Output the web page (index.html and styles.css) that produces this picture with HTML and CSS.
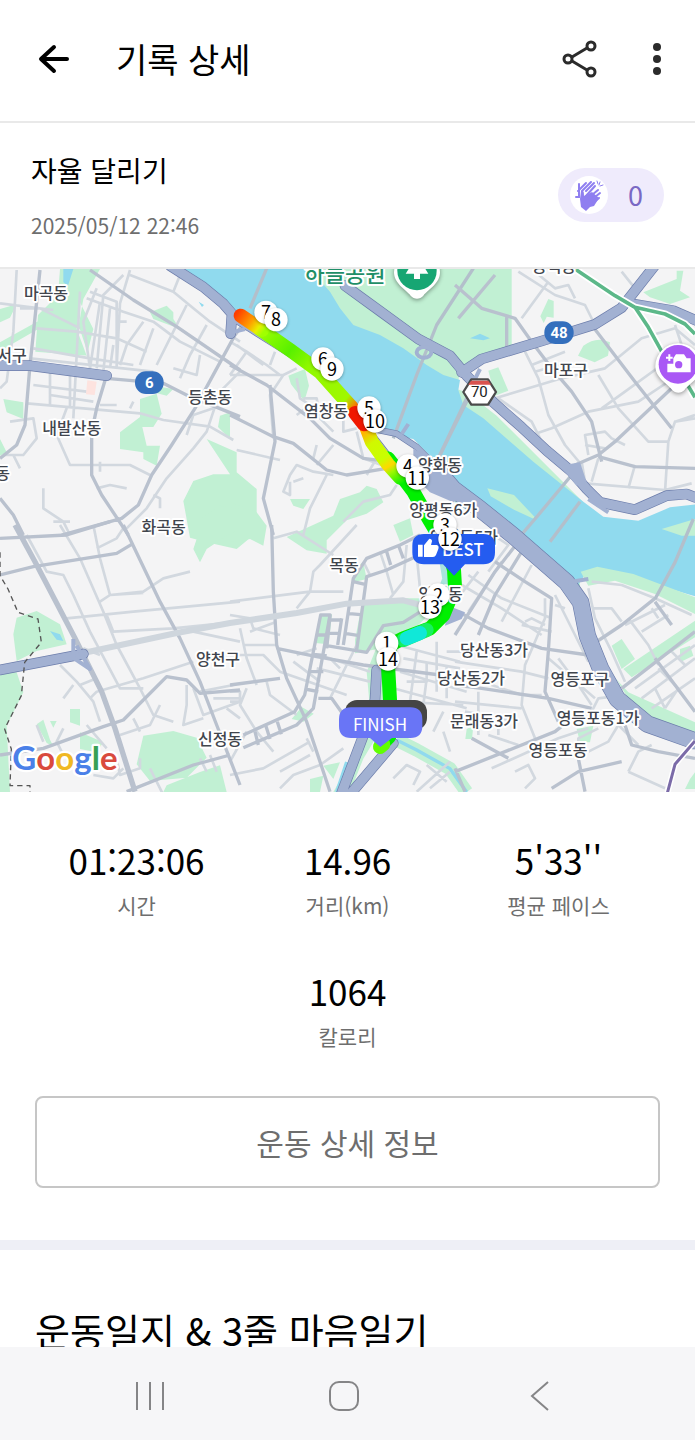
FILE: index.html
```html
<!DOCTYPE html>
<html lang="ko">
<head>
<meta charset="utf-8">
<meta name="viewport" content="width=device-width, initial-scale=1">
<title>기록 상세</title>
<link rel="stylesheet" href="styles.css">
</head>
<body>
<div class="app">
  <header class="topbar">
    <button class="icon-button" type="button" aria-label="뒤로">
      <svg width="36" height="36" viewBox="0 0 36 36" fill="none" stroke="#000" stroke-width="4" stroke-linecap="round" stroke-linejoin="round"><path d="M18 6 5 18l13 12M6 18h25"/></svg>
    </button>
    <h1 class="topbar-title">기록 상세</h1>
    <button class="icon-button" type="button" aria-label="공유">
      <svg width="38" height="38" viewBox="0 0 38 38" fill="none" stroke="#2b2b2b" stroke-width="3"><path d="M11 17 26 8M11 21l15 9"/><circle cx="7" cy="19" r="4"/><circle cx="30" cy="6" r="4"/><circle cx="30" cy="32" r="4"/></svg>
    </button>
    <button class="icon-button more" type="button" aria-label="더보기">
      <svg width="12" height="36" viewBox="0 0 12 36" fill="#2b2b2b"><circle cx="6" cy="6" r="4"/><circle cx="6" cy="18" r="4"/><circle cx="6" cy="30" r="4"/></svg>
    </button>
  </header>

  <main class="content">
    <section class="summary">
      <div>
        <h2 class="summary-title">자율 달리기</h2>
        <time class="summary-date" datetime="2025-05-12T22:46">2025/05/12 22:46</time>
      </div>
      <button class="cheer" type="button" aria-label="응원 0">
        <span class="cheer-icon">
          <svg width="38" height="38" viewBox="0 0 38 38" fill="none" stroke="#8f7ff0" stroke-width="3" stroke-linecap="round">
            <path stroke-width="2" d="M9 8v13l-3 0M8 15l8-8M12 15l9-9M16 15l8-8"/>
            <path fill="#8f7ff0" stroke="none" d="M11 15c3-1 3 2 3 5l8-4 7 6-5 8-4 1-4 4-5-4-1-8z"/>
            <path stroke-width="2" d="m15 21 10-11M17 23l11-9M20 25l10-8M22 28l7-6"/>
            <path stroke-width="1" d="m27 5 1 3M30 6l-1 3M33 9l-3 1"/>
          </svg>
        </span>
        <span class="cheer-count">0</span>
      </button>
    </section>

    <svg class="map" viewBox="0 0 2085 1569" preserveAspectRatio="xMidYMid slice" role="img" aria-label="달리기 경로 지도">
      <defs>
        <linearGradient id="g-start" gradientUnits="userSpaceOnUse" x1="710" y1="130" x2="790" y2="190"><stop offset="0" stop-color="#ff3c00"/><stop offset=".5" stop-color="#ff9a00"/><stop offset=".8" stop-color="#e8f000"/><stop offset="1" stop-color="#a0ff00"/></linearGradient>
        <linearGradient id="g-mid" gradientUnits="userSpaceOnUse" x1="1110" y1="480" x2="1215" y2="640"><stop offset="0" stop-color="#ffb400"/><stop offset=".2" stop-color="#d0f800"/><stop offset=".5" stop-color="#c8ff00"/><stop offset=".65" stop-color="#ffd800"/><stop offset=".75" stop-color="#a0f800"/><stop offset="1" stop-color="#00f000"/></linearGradient>
        <linearGradient id="g-long" gradientUnits="userSpaceOnUse" x1="780" y1="180" x2="1060" y2="420"><stop offset="0" stop-color="#a0ff00"/><stop offset=".3" stop-color="#58f000"/><stop offset=".5" stop-color="#90f800"/><stop offset=".9" stop-color="#a0f800"/><stop offset="1" stop-color="#ff7000"/></linearGradient>
      </defs>

      <rect class="land" width="2085" height="1569"/>

      <!-- parks -->
      <g class="park">
        <path d="M180 0h120l-50 90-14 80 30 90-160-12 8-110 60-60zM240 100l-10 80 30 80 20-80zM0 120l50-14-20 40-30 14zM0 220l180-100-30 40-150 86zM450 130l50-20 20 20 0 20 20 30-80-30zM460 350l60 10-20 20-40-10zM420 390l50-16 15 60-25 40-40 0zM360 490l60-46 20 86 40 0-10 60-40-20 0-20-70-10zM660 440l30-10v80l-36-36zM620 510l90 40 0 60 60 50v130l-60 50-90-20-50-14-20-110 30-60 60-20 50 0z"/>
        <path d="M0 510l20 40-20 10zM10 390l60 10v50l-50-20z"/>
        <path d="M930 0h605v238l-155 60-10 80-180-30-260-200z"/>
        <path d="M1465 305l30-10 30 70-40 15z"/>
        <path d="M1645 90l16 6v50l-30-4 30-40-30 60-10-20zM1750 230q40-30 80-10l-6 40-40 20-50-20zM1930 70l100-40 0-25 20 0-10 60 30 20-60 20-60-20z"/>
        <path d="M865 320l50-20 12 50-14 46-40-50zM870 690l60 0-20 30-30-10zM1000 740l20-50 60-20 20-20 30 10 20 40-50 34-60 20-60 60 0 40-60-10-60-40z"/>
        <path d="M690 700l80 30 30 40-10 60-40-20-60 10z"/>
        <path d="M600 780l-20 60 20 40 20-40 60-40 40-20v-60l-60-10-60 40zM50 1046l60-20 70 40 20 60-90 20-60 30-10-80zM0 1210h50l20 60-50 100 10 199H0zM110 1366l20-14 20 60 10 20-20-10zM210 1320l30 0 0 50-30-10zM150 1356l20 0-10 20zM240 1390l70 30-20 30-50-10zM430 1400l90-14 70 20 30 60-60 60-110 10-40-50zM500 1549l100-40 60-20 20 80H490z"/>
        <path d="M1085 1008l110-20 80 0 20 40-50 50-100 60-80 15 0-40zM960 1036h36l-10 90-40-4zM875 1350l30-36 36 20-30 24zM970 1490l50-10-20 50zM930 1530l40-10-10 49h-30zM1180 768l50-20 10 50-40 20zM1060 900l30-20 10 50-40 10z"/>
        <path d="M1000 1569l90-160 20-90-10-110 40-100 40 20-30 130 0 110-60 100-40 100z"/>
        <path d="M1745 1010l20 110 90 120 60 100 170 60v-40l-200-90-110-120-40-120zM1835 1130l30-20 40 60-40 30zM1870 1200l215-145v50l-190 120zM2040 1140l30-10 10 30-40 20zM1730 1380l50-10-10 50-30 0zM1400 1380l20-10-4 40-20 0zM2070 1530l15-20v50h-30z"/>
      </g>

      <!-- Han river -->
      <path class="park" d="M1350 610l350 260 40 50v50l-60-20-60-60-80-70-100-70-90-60zM1370 360l30 10 90 70 110 110 90 90 60 60-40 0-280-230-80-60z"/>
      <path class="water" d="M540 0h390l60 68 30 50 40 50 80 30 70 40 70 50 50 30 50 15-5 30 15 45 60 40 150 130 150 120 60 45 105 12 95-40 85-10v280l-185-55-110-25-40 5-28 40-42-40-60-60-80-70-100-80-90-65-50-55-70-70-70-12-100-55-90-100-130-100-110-70-60-60z"/>
      <path class="park" d="M1742 908l50-15 108 22 185 70v50l-120-60-120-40-80 15zM1985 780l100-30v50l-40 0z"/>
      <path class="water" d="M190 0h30l-16 50-14-10zM150 1086l30 10 10 20-20-4zM1410 208l30-14 30 14-20 6zM596 98l16 10-6 6z"/>
      <path class="park" d="M1462 658l80 20 60 64 0 8-60-28-70-40z"/>
      <path class="bank" d="M1190 1413l60 30 100 56 50 70"/>
      <path class="stream" d="M1010 1569l30-90M1190 1413l60 30 100 56 50 70"/>
      <path class="shore" d="M1330 770v100l10 60-20 50"/>

      <!-- local streets -->
      <g class="minor" transform="translate(0 -12)">
        <path d="M50 15 40 200 20 350 0 370M0 115l160 20M60 130l60 0 120 60M110 190l120 10 120 20 90 40M100 250l170 30 130 20M240 80l-20 380M390 15l-30 100-10 190M270 80l80 30 0 200M290 70l-40 100 20 140M370 30l-60 60-20 220M390 30l130 50 60 50 50 40 90 60M520 80l20-50M260 100l110 40 90 30 80 60 120 60M430 170l-50 70-20 60M460 190l-40 110M560 120l-40 80-50 100M620 180l-50 90-30 70M600 270l-10 60-70-20M90 280l370 40M150 300v120M210 320v110M100 360l160 20M150 390l130 20M80 415l340 30 70 20 140 20 70 40M200 430l-30 80 40 90 180 0 60 30M300 590v30M130 670l0 60 60 40 20 40M290 670l40-10 50 10M30 470l70-10 10 60-40 50-60 0M40 570l20 40M300 420l50 0M400 410l-10 20M720 320l-60 60-40 120-40 50-80 90-60 90-60 60M560 510l20-60 60-20M160 770h50M460 690l20 10 0 30M300 110l-30 200M330 130l-20 190M350 170l30 0M340 240l-10 70"/>
      </g>
      <g class="minor" transform="translate(690 -12)">
        <path d="M0 230l50 30 60 40 40 30M50 260l-50 70M0 330l160 0M100 300l-80-60M120 300l15-40M160 330l-40 60 10 130M160 330l40-20M200 340l10 60 30 20-40 30M220 400l40 0 10 60 40 40M20 555l130 30M310 630l-60-10-50-20-20 30-20 50 20 10 0-40M250 580l10-40M260 600l50-60M290 630l-50 100-20 80M190 650l30-10M340 460v40l40-10M380 500l20 80 80 30M440 580l-30 50M340 770l60-60 80-20 20-30"/>
      </g>
      <g class="minor" transform="translate(1365 -12)">
        <path d="M190 20l110 70 90 30 30 60M240 20l60 50 40-10 20 40M200 160l80-110M120 400l200-60 130-30 110-90 100-30 60 50M230 300l100-40M240 320l70-20M210 260l40 80 30 110 50 90 50 60M130 400l100 70 30 60M230 510l60-20 110-50 150-30 120-80M430 330l60 100 90 100 60 0 20-60 60-10M440 430l70-50 110-80M400 570l-10-60 60-10 20 20 40 20M390 540l60 10M390 655l240 20 80-20M540 600l-20 70M380 590l10 60M430 580l-20 70M640 530l-10 150M660 470l60-20M500 20l40 50M660 180l20 60"/>
      </g>
      <g class="minor" transform="translate(0 768)">
        <path d="M280 0l20 100 30 110 100-6M300 230l30-20 100-10 60-40 80-20M180 0l60 100 70 160 40 100 70 130 40 80 60 20M80 30l60 110 50 10 30 60 50 110 90 170 70 0M200 280l200-20 320-30M320 270l20 50 180-10 200-20M580 320l140 30M270 520l20-20 140-40 150-50M180 420l50 50 50 60 20 60M240 480l50-20M190 520l30-40M250 370l50 20M560 480l0 60-10 60 60-20M580 490l30 80 110-40M600 500l100-20M480 540l-30 60-90 30M400 580l20 40M110 600l20 50M190 610l-20 40 20 40M260 600l60 70M350 700l10 50 60-20 0-30M280 750l60 10 30-30M720 580l-40-30M640 520l80 0M600 700l20 40M630 690l20 50M450 730l40 80M290 70l60-30 20-30"/>
      </g>
      <g class="minor" transform="translate(690 768)">
        <path d="M0 230l240-30 100 0M130 40l70-20 110 70M380 0l-110 120-20 20-10 60-40 50M0 270l60 10 10 30 80 20M30 310l20 90 30 80M60 320l80-30M40 360l100 0M0 390l100 0 50 50 200 70M0 500h30v30H0M50 490l-20 50 50 80 50 60M110 470l10 40 80 60M0 750l100-20 140-80M0 710l50-90M150 790l40-40 80-30 70-50M150 740l90-50M230 640l20 40M300 520l80-160M200 390l60-20M190 410l80 60M270 390l150 50M260 430l160 40M300 400l30 30M430 520l20-50M400 110l20 40M450 80l20 60 20 70M530 60l-10 110-40 50M560 90l10 100"/>
        <path d="M510 440l200 60M490 490l220 60M520 400l170 30M500 360l190 50M560 380l-20 150M620 350l0 150M590 460l-10 80M650 420l0 100M500 530l200 10M650 380l60 0M530 470h60v-60M560 800l100-90M590 720l60 50M490 760l40-40 40 20-20 40M600 790l60-50M640 620l20 60M640 560l-30 60"/>
      </g>
      <g class="minor" transform="translate(1365 768)">
        <path d="M40 150l100 70 150 60M20 180l120 70 120 80M0 230l70-90M40 260l100-150M140 290l90-170M210 290l20-10 40 20M200 300l90 20M270 220l0 60-60 140-10 120 40 100M300 210l60 120 40 80M300 240l30 10M310 400l60 80 40 60M280 400l140 120M0 410l200 30 80 20M20 450l180 60 60 0M0 530l200 20M70 500v130M30 560l160 30M100 630l90 30M130 570v60M110 730l200-90 90-30M180 740l40-20 20 40-30 30M400 680l60-30 30-50 60 60M520 740l30-60 40-20M520 740l110 50M370 690l0-50 60-30M410 560l20-40 80-10M410 170l90 10 100 40 110 50M410 250l60 0 30 40M400 190l20 90 50 100 40 90M540 490l180-130M560 520l160-120M590 550l130-90M610 430l60 60-40 60M650 380l40 40M520 280l60 80 30 60M590 250l20 30M510 300l120-60M560 320l80-50M600 490l30 60M100 20l60 40-60 80"/>
      </g>

      <!-- arterial roads -->
      <g class="major" transform="translate(0 -12)">
        <path d="M120 15 90 300 75 480 50 540 0 580M270 15l130 90 130 80 190 130M320 330l-30 100-15 70 0 130 30 60 80 120M0 700l40 50 30 60M185 810l180-50 50-40 40-90 60-90 70-110 60-110 60-110 30-40M320 340l170 15 80 40 150 60"/>
      </g>
      <g class="major" transform="translate(690 -12)">
        <path d="M0 300l110 60 130 100 60 60 100 60 80 10M0 450l130 65 60 20 100 80 60 15 120-20M120 360l15 170-35 170 30 110"/>
        <path class="bridge" d="M110 10l-50 120M730 10l-110 170-60 150-70 190M710 400l-90 190"/>
      </g>
      <g class="major" transform="translate(1365 -12)">
        <path d="M10 160 120 30M0 60l80 70 100 30 50 70 60 80 60 70 60 90 30 120M155 150l0 100M410 180l130 170 110 140M650 370 480 530l-50 40-70 30"/>
        <path d="M430 575l110 30 180 5"/>
        <path class="bridge" d="M350 630l-100 120-60 70M40 400l-100 200M375 710l-90 120"/>
      </g>
      <g class="major" transform="translate(0 768)">
        <path d="M0 40l200-10 130-40M0 150l100-25 250-40 50-30M370 0l110 230 60 110 60 130 50 130 70 180M0 690l130-20 180-65 60-20 60-60 70-70 60 10 40 40 120-10M380 800l200-80 110-30"/>
        <path class="trunk" d="M45 0l60 110 120 230 80 160 40 110 60 190"/>
      </g>
      <g class="major" transform="translate(690 768)">
        <path d="M125 0l5 200 10 160 30 100 60 130 70 210M140 370l120 25 140 25 230 30M0 480l150-20"/>
        <path d="M40 668l160-68 50-50 50-280h-28l-48 240-30 50-154 70M75 620l10 40M108 604l12 38M142 590l12 38M225 492l40 8M240 440l40 0M250 388l40 4M260 330l32 0M265 520l40 0 50 70"/>
        <path d="M340 360l30-200 40-60 100-40 60-30M380 375l30-220 60-20 110-50M370 170l35 8M350 265l42 4M345 325l38 6M300 270l-10 100M335 280l-12 80M300 285h36M296 325h36M290 362l120 20 50-80 60-10 80-50M470 80l12 40M505 60l15 40"/>
      </g>
      <g class="major" transform="translate(1365 768)">
        <path d="M0 330l120-190 70-90M70 330l50-120 80-130M10 260l90 50 160 60 140 20M120 110l90 60 80 50-10 160-10 120 40 90M0 740l300-120 50-40M0 480l80 10 200 30 130 30M50 640l110 60M410 360l90-60 100-80M600 230l50 70M500 490l220-170M600 400l120 160M510 600l20 60 80 20 110 20M290 790l80-50 130-30M370 700l20 100M0 730l30 70"/>
        <path class="bridge" d="M600 222l60-110 55-130"/>
      </g>
      <path class="arterial-light" d="M250 1152l280-60 160-30 200-30 150-28 170-10 110 30"/>

      <!-- expressways -->
      <g class="express-edge">
        <path d="M510-10l100 64 60 50 26 30-4 60"/>
        <path d="M0 290l90 0 230 30M0 1203l250-48"/>
        <path d="M1035 50l110 80 110 80 95 50 50 60 80 80 85 75 75 70 75 63 45 52 40 40 105 22 95-42 60-5 25 10"/>
        <path d="M1385 310l60-40 180-54 160-50 80-50 110-140M1900 105l120 20 70 30"/>
        <path d="M1130 1203l-5 90-35 107-70 185M1180 1423l-140 165"/>
      </g>
      <path class="express-edge slim" d="M700 150l50 30 80 50 110 70 120 130 50 60 70 90"/>
      <path class="express-edge slim" d="M1110 478l80 16 60 40 60 60"/>
      <path class="express-edge broad" d="M1300 590l60 70 80 60 100 80 80 70 80 70 42 60 20 100 40 100 50 90 90 75 140 50"/>
      <g class="express">
        <path d="M510-10l100 64 60 50 26 30-4 60"/>
        <path d="M0 290l90 0 230 30M0 1203l250-48"/>
        <path d="M1035 50l110 80 110 80 95 50 50 60 80 80 85 75 75 70 75 63 45 52 40 40 105 22 95-42 60-5 25 10"/>
        <path d="M1385 310l60-40 180-54 160-50 80-50 110-140M1900 105l120 20 70 30"/>
        <path d="M1130 1203l-5 90-35 107-70 185M1180 1423l-140 165"/>
      </g>
      <path class="express slim" d="M700 150l50 30 80 50 110 70 120 130 50 60 70 90"/>
      <path class="express slim" d="M1110 478l80 16 60 40 60 60"/>
      <path class="express broad" d="M1300 590l60 70 80 60 100 80 80 70 80 70 42 60 20 100 40 100 50 90 90 75 140 50"/>
      <path class="ramp-fill" d="M1240 540l60 30 90 110-30 20-70-30-50-50zM1680 590l60-10 20 60-30 10zM1345 1010l50 20-10 20-50 20z"/>
      <path class="ramp" d="M1250 250a22 16 0 1 0 44 0a22 16 0 1 0-44 0M695 190l40-10M1440 300l-20 40M1225 465l-20 30M1765 690l60 40M1705 940l60-10M220 1110v60M210 1160l60 40-40-70"/>
      <path class="rail-edge" d="M1725 0l120 80 60 35 40 60 50 90 60 70 30 50M1905 115l90 20 60 30 30 30"/>
      <path class="rail" d="M1725 0l120 80 60 35 40 60 50 90 60 70 30 50M1905 115l90 20 60 30 30 30"/>
      <path class="metro-edge" d="M2085 1416l-60 70-24 90"/>
      <path class="metro" d="M2085 1416l-60 70-24 90"/>
      <path class="boundary" d="M0 850v70l24 40 30 70 60 20 10 70-50 60-10 100-50 100 20 60-4 110h60v40"/>
      <path fill="#fde3df" d="M262 334l28 4-6 40-26-2z"/>

      <!-- run track coloured by pace -->
      <g class="track">
        <path stroke="#00f000" d="M1164 568l16 20 60 80 45 80 65 110 12 45 3 50-35 85-40 40-80 30-40 20-6 60 6 105-2 110-25 25"/>
        <path stroke="#18f060" d="M1280 1083l-70 30"/>
        <path stroke="#10e8d8" d="M1260 1092l-40 16"/>
        <path stroke="#60ff00" d="M1140 1434l10-8"/>
        <path stroke="url(#g-mid)" d="M1100 478l15 40 49 68 36 40"/>
        <path stroke="url(#g-long)" d="M780 180l90 63 90 66 75 84 20 22"/>
        <path stroke="url(#g-start)" d="M722 140l64 43"/>
        <path stroke="#f01800" d="M1065 432l27 34"/>
      </g>

      <!-- place names -->
      <g class="place" text-anchor="middle">
        <text x="138" y="90">마곡동</text><text x="36" y="276">서구</text><text x="630" y="402">등촌동</text>
        <text x="215" y="495">내발산동</text><text x="8" y="630">동</text><text x="491" y="792">화곡동</text>
        <text x="978" y="444">염창동</text><text x="1320" y="606">양화동</text><text x="1330" y="741">양평동6가</text>
        <text x="1698" y="321">마포구</text><text x="1662" y="10">공덕동</text><text x="1032" y="906">목동</text>
        <text x="1392" y="822">양평동5가</text><text x="1322" y="992">양평동</text><text x="654" y="1188">양천구</text>
        <text x="1482" y="1160">당산동3가</text><text x="1413" y="1245">당산동2가</text><text x="1740" y="1248">영등포구</text>
        <text x="1452" y="1374">문래동3가</text><text x="1794" y="1365">영등포동1가</text><text x="1674" y="1461">영등포동</text>
        <text x="660" y="1427">신정동</text>
      </g>
      <text class="park-name" x="1035" y="40" text-anchor="middle">하늘공원</text>

      <!-- shields and points of interest -->
      <g class="shield" text-anchor="middle">
        <rect x="405" y="307" width="86" height="68" rx="33"/><text x="448" y="358">6</text>
        <rect x="1633" y="157" width="88" height="68" rx="33"/><text x="1677" y="208">48</text>
      </g>
      <path d="M1414 331h50l24 38-24 38h-50l-24-38z" fill="#fff" stroke="#4b4b4b" stroke-width="7" stroke-linejoin="round"/>
      <path d="M1413 335h52l8 12h-68z" fill="#d9534f"/>
      <text class="shield-local" x="1438" y="385" text-anchor="middle">70</text>
      <g>
        <path class="poi-back" d="M1182 10a68 68 0 0 1 138 0c0 34-34 50-50 70-10 12-28 12-38 0-16-20-50-36-50-70z"/>
        <circle cx="1251" cy="5" r="59" fill="#17a673"/>
        <path fill="#fff" d="M1251-40l34 54h-25v16h-18V14h-25z"/>
        <path class="poi-back" d="M1966 292a68 68 0 0 1 138 0c0 34-34 50-50 70-10 12-28 12-38 0-16-20-50-36-50-70z"/>
        <circle cx="2034" cy="286" r="58" fill="#a958f5"/>
        <path fill="#fff" d="M2020 268l8-12h24l8 12h12v42h-70v-26h18z"/>
        <path d="M2008 256v20M1998 266h20" stroke="#fff" stroke-width="6"/>
        <circle cx="2036" cy="287" r="11" fill="#a958f5"/>
      </g>

      <!-- kilometre markers -->
      <g class="km" text-anchor="middle">
        <circle cx="798" cy="130" r="35"/><text x="798" y="150">7</text>
        <circle cx="828" cy="152" r="35"/><text x="828" y="172">8</text>
        <circle cx="969" cy="270" r="35"/><text x="969" y="290">6</text>
        <circle cx="996" cy="300" r="35"/><text x="996" y="320">9</text>
        <circle cx="1107" cy="417" r="35"/><text x="1107" y="437">5</text>
        <circle cx="1125" cy="456" r="35"/><text x="1125" y="476">10</text>
        <circle cx="1224" cy="591" r="35"/><text x="1224" y="611">4</text>
        <circle cx="1252" cy="627" r="35"/><text x="1252" y="647">11</text>
        <circle cx="1335" cy="768" r="35"/><text x="1335" y="788">3</text>
      </g>
      <path fill="#245cf0" d="M1272 795h178q35 0 35 35v20q0 36-35 36h-55l-33 34-33-34h-57q-35 0-35-36v-20q0-35 35-35z"/>
      <path fill="#fff" d="M1254 827h14v36h-14zM1272 829l16-20q8 0 8 8l-3 11h17q8 2 5 12l-7 18q-3 6-9 6h-27z"/>
      <text class="pin-text pin-best" x="1389" y="860" text-anchor="middle">BEST</text>
      <g class="km" text-anchor="middle">
        <circle cx="1350" cy="810" r="35"/><text x="1350" y="830">12</text>
        <circle cx="1314" cy="978" r="35"/><text x="1314" y="998">2</text>
        <circle cx="1290" cy="1014" r="35"/><text x="1290" y="1034">13</text>
        <circle cx="1160" cy="1123" r="35"/><text x="1160" y="1143">1</text>
        <circle cx="1164" cy="1170" r="35"/><text x="1164" y="1190">14</text>
      </g>
      <rect x="1035" y="1293" width="246" height="90" rx="36" fill="#454545"/>
      <path fill="#6975f6" d="M1053 1315h178q36 0 36 36v20q0 36-36 36h-55l-35 27-31-27h-57q-36 0-36-36v-20q0-36 36-36z"/>
      <text class="pin-text" x="1140" y="1387" text-anchor="middle">FINISH</text>
      <text class="google" x="37" y="1502"><tspan fill="#4a80e8">G</tspan><tspan fill="#d94a3d">o</tspan><tspan fill="#f0b823">o</tspan><tspan fill="#4a80e8">g</tspan><tspan fill="#38a055">l</tspan><tspan fill="#d94a3d">e</tspan></text>
    </svg>

    <dl class="stats">
      <div class="stat"><dt>시간</dt><dd>01:23:06</dd></div>
      <div class="stat"><dt>거리(km)</dt><dd>14.96</dd></div>
      <div class="stat"><dt>평균 페이스</dt><dd>5'33''</dd></div>
      <div class="stat stat-full"><dt>칼로리</dt><dd>1064</dd></div>
    </dl>
    <div class="actions"><button class="detail-button" type="button">운동 상세 정보</button></div>
    <section class="diary"><h2>운동일지 &amp; 3줄 마음일기</h2></section>
  </main>

  <nav class="system-nav" aria-label="시스템">
    <button class="icon-button" type="button" aria-label="최근 앱"><svg width="36" height="36" viewBox="0 0 36 36" fill="none" stroke="#858587" stroke-width="2"><path d="M5 4v28M18 4v28M31 4v28"/></svg></button>
    <button class="icon-button" type="button" aria-label="홈"><svg width="36" height="36" viewBox="0 0 36 36" fill="none" stroke="#858587" stroke-width="2"><rect x="3" y="4" width="28" height="28" rx="9"/></svg></button>
    <button class="icon-button" type="button" aria-label="뒤로 가기"><svg width="36" height="36" viewBox="0 0 36 36" fill="none" stroke="#858587" stroke-width="2"><path d="M26 4 10 18l16 14"/></svg></button>
  </nav>
</div>
</body>
</html>
```
FILE: styles.css
```css
* { box-sizing: border-box; }
body, h1, h2, dl, dd, button { margin: 0; }
body {
  background: #fff;
  color: #000;
  font-family: "Noto Sans CJK KR", sans-serif;
}
h1, h2 { font-weight: 400; }
button { font: inherit; cursor: pointer; }
svg { display: block; }

.app { display: flex; flex-direction: column; height: 100vh; }

.topbar {
  flex: none;
  display: flex;
  align-items: center;
  height: 123px;
  padding: 0 32px 4px 36px;
  border-bottom: 2px solid #e9e9e9;
}
.icon-button { padding: 0; border: 0; background: none; }
.topbar-title { flex: 1; padding-left: 44px; font-size: 34px; line-height: 48px; }
.more { margin-left: 52px; }

.content { flex: 1; min-height: 0; overflow-y: auto; scrollbar-width: none; }

.summary {
  display: flex;
  justify-content: space-between;
  align-items: center;
  height: 146px;
  padding: 0 31px;
  border-bottom: 2px solid #e9e9e9;
}
.summary-title { font-size: 28px; line-height: 42px; }
.summary-date {
  display: block;
  margin-top: 18px;
  color: #6e6e6e;
  font-size: 21px;
  line-height: 32px;
}
.cheer {
  display: flex;
  align-items: center;
  gap: 20px;
  height: 54px;
  padding: 0 21px 0 12px;
  border: 0;
  border-radius: 27px;
  background: #efebfc;
  color: #7a68c4;
}
.cheer-icon { border-radius: 50%; background: #fff; }
.cheer-count { font-size: 27px; line-height: 40px; }

.map { width: 100%; height: auto; overflow: hidden; font-family: "Noto Sans CJK KR", sans-serif; }
.map path { stroke-linejoin: round; }
.land { fill: #f4f4f5; }
.park { fill: #c1f0d3; }
.water { fill: #90daee; }
.bank { fill: none; stroke: #c1f0d3; stroke-width: 40; }
.shore { fill: none; stroke: #a9e4dd; stroke-width: 26; }
.stream { fill: none; stroke: #90daee; stroke-width: 10; }
.minor { fill: none; stroke: #d2d8df; stroke-width: 8; }
.major { fill: none; stroke: #b9c1ce; stroke-width: 10; }
.bridge { stroke: #b3bfcb; stroke-width: 10; }
.trunk { stroke-width: 16; }
.arterial-light { fill: none; stroke: #cfd6dd; stroke-width: 18; }
.express-edge { fill: none; stroke: #6c7dab; stroke-width: 32; stroke-linecap: round; }
.express { fill: none; stroke: #a2b1d2; stroke-width: 28; stroke-linecap: round; }
.express-edge.slim { stroke-width: 20; }
.express.slim { stroke-width: 16; }
.express-edge.broad { stroke-width: 52; }
.express.broad { stroke-width: 48; }
.ramp-fill { fill: #a2b1d2; }
.ramp { fill: none; stroke: #a2b1d2; stroke-width: 12; }
.rail-edge { fill: none; stroke: #fff; stroke-width: 22; }
.rail { fill: none; stroke: #5cb889; stroke-width: 11; }
.metro-edge { fill: none; stroke: #fff; stroke-width: 18; }
.metro { fill: none; stroke: #7b6ba8; stroke-width: 9; }
.boundary { fill: none; stroke: #555; stroke-width: 4; stroke-dasharray: 16 12; }

.place, .park-name, .google { paint-order: stroke; stroke: #fff; stroke-linejoin: round; }
.place { fill: #41454d; stroke-width: 12; font-size: 48px; font-weight: 500; }
.park-name { fill: #1f8f68; stroke-width: 12; font-size: 66px; font-weight: 500; }
.shield rect { fill: #346fbd; }
.shield text { fill: #fff; font: 700 45px Roboto, sans-serif; }
.shield-local { fill: #222; font: 400 45px Roboto, sans-serif; }
.poi-back { fill: #fff; filter: drop-shadow(0 4px 6px #0006); }
.track { fill: none; stroke-width: 42; stroke-linecap: round; }
.km circle { fill: #fff; filter: drop-shadow(0 3px 5px #0005); }
.km text { fill: #000; font-size: 54px; }
.pin-text { fill: #fff; font-size: 51px; }
.pin-best { font-weight: 500; }
.google { stroke-width: 14; font: 700 99px Lato, sans-serif; }

.stats {
  display: grid;
  grid-template-columns: repeat(3, 1fr);
  row-gap: 41px;
  padding: 42px 31px 0;
}
.stat { display: flex; flex-direction: column-reverse; align-items: center; }
.stat-full { grid-column: 1 / -1; }
.stat dt { color: #6e6e6e; font-size: 21px; line-height: 38px; }
.stat dd { font-size: 35px; line-height: 52px; }

.actions { padding: 41px 35px 52px; }
.detail-button {
  width: 100%;
  height: 92px;
  border: 2px solid #c6c6c6;
  border-radius: 8px;
  background: #fff;
  color: #6e6e6e;
  font-size: 30px;
}
.diary { padding: 52px 35px 80px; border-top: 10px solid #eeeff6; }
.diary h2 { font-size: 38px; line-height: 56px; }

.system-nav {
  flex: none;
  display: flex;
  justify-content: center;
  gap: 159px;
  height: 93px;
  padding: 5px 6px 0 0;
  align-items: center;
  background: #f6f6f8;
}
```
